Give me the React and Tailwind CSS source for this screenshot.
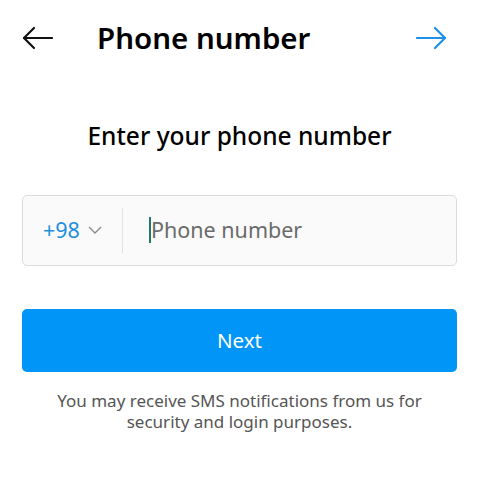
export default function App() {
  return (
    <div className="w-[479px] h-[482px] bg-white overflow-hidden font-['Noto_Sans',sans-serif]">
      <div className="flex items-center h-[76px] pl-[22px] pr-[32px]">
        <button className="w-[31px] h-[24px] flex items-center">
          <svg width="31" height="24" viewBox="0 0 31 24" fill="none" stroke="#111" strokeWidth="2.2" strokeLinecap="round" strokeLinejoin="round">
            <path d="M30 12H2" />
            <path d="M12 2 2 12l10 10" />
          </svg>
        </button>
        <h1 className="ml-[44px] text-[29.5px] font-semibold text-black leading-none flex-1">Phone number</h1>
        <button className="w-[31px] h-[24px] flex items-center">
          <svg width="31" height="24" viewBox="0 0 31 24" fill="none" stroke="#1e90e8" strokeWidth="2.2" strokeLinecap="round" strokeLinejoin="round">
            <path d="M1 12h28" />
            <path d="M19 2l10 10-10 10" />
          </svg>
        </button>
      </div>

      <h2 className="mt-[48px] text-center text-[24.5px] font-medium text-black leading-none">Enter your phone number</h2>

      <div className="mx-[22px] mt-[46px] h-[71px] flex items-center border border-[#dcdcdc] rounded-[5px] bg-[#fafafa]">
        <div className="flex items-center pl-[20px] w-[99px]">
          <span className="text-[21.5px] text-[#1e8ee0]">+98</span>
          <svg className="ml-[8px]" width="14" height="8" viewBox="0 0 14 8" fill="none" stroke="#888" strokeWidth="1.3">
            <path d="M1 1l6 6 6-6" />
          </svg>
        </div>
        <div className="w-px h-[45px] bg-[#e2e2e2]" />
        <div className="flex items-center ml-[26px]">
          <div className="w-[2px] h-[26px] bg-[#1b7a6a]" />
          <span className="text-[21.5px] text-[#6b6b6b]">Phone number</span>
        </div>
      </div>

      <button className="mx-[22px] mt-[43px] w-[435px] h-[63px] rounded-[5px] bg-[#0095f6] text-white text-[20.5px] flex items-center justify-center">
        Next
      </button>

      <p className="mt-[18px] px-[36px] text-center text-[17px] leading-[21px] text-[#555]">
        You may receive SMS notifications from us for security and login purposes.
      </p>
    </div>
  );
}
